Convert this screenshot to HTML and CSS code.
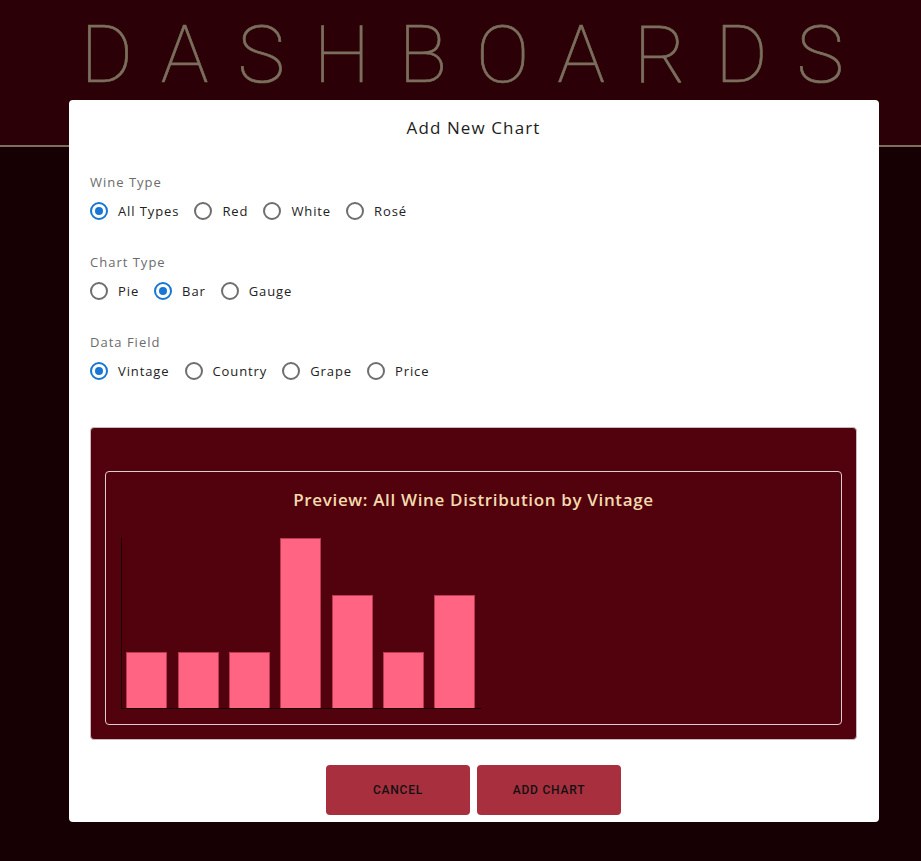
FILE: index.html
```html
<!DOCTYPE html>
<html>
<head>
<meta charset="utf-8">
<link rel="stylesheet" href="styles.css">
</head>
<body>
<header class="top">
  <h1 class="brand">DASHBOARDS</h1>
</header>
<main class="board"></main>

<div class="overlay">
  <div class="modal">
    <h2 class="modal-title">Add New Chart</h2>

    <section class="group">
      <div class="group-label">Wine Type</div>
      <div class="options">
        <label class="opt"><span class="radio on"></span>All Types</label>
        <label class="opt"><span class="radio"></span>Red</label>
        <label class="opt"><span class="radio"></span>White</label>
        <label class="opt"><span class="radio"></span>Rosé</label>
      </div>
    </section>

    <section class="group">
      <div class="group-label">Chart Type</div>
      <div class="options">
        <label class="opt"><span class="radio"></span>Pie</label>
        <label class="opt"><span class="radio on"></span>Bar</label>
        <label class="opt"><span class="radio"></span>Gauge</label>
      </div>
    </section>

    <section class="group">
      <div class="group-label">Data Field</div>
      <div class="options">
        <label class="opt"><span class="radio on"></span>Vintage</label>
        <label class="opt"><span class="radio"></span>Country</label>
        <label class="opt"><span class="radio"></span>Grape</label>
        <label class="opt"><span class="radio"></span>Price</label>
      </div>
    </section>

    <div class="preview">
      <div class="preview-inner">
        <div class="preview-title">Preview: All Wine Distribution by Vintage</div>
        <svg class="chart" width="370" height="182" viewBox="0 0 370 182">
          <g fill="#ff6482" stroke="#b83a55" stroke-width="1">
            <rect x="5.5" y="125.5" width="40" height="56"/>
            <rect x="57.5" y="125.5" width="40" height="56"/>
            <rect x="108.5" y="125.5" width="40" height="56"/>
            <rect x="159.5" y="11.5" width="40" height="170"/>
            <rect x="211.5" y="68.5" width="40" height="113"/>
            <rect x="262.5" y="125.5" width="40" height="56"/>
            <rect x="313.5" y="68.5" width="40" height="113"/>
          </g>
          <line x1="0.5" y1="10" x2="0.5" y2="182" stroke="#1a0000" stroke-width="1"/>
          <line x1="0" y1="181.5" x2="360" y2="181.5" stroke="#1a0000" stroke-width="1"/>
        </svg>
      </div>
    </div>

    <div class="actions">
      <button class="btn">CANCEL</button>
      <button class="btn">ADD CHART</button>
    </div>
  </div>
</div>
</body>
</html>
```

FILE: styles.css
```css
* { box-sizing: border-box; }
html, body { margin: 0; padding: 0; }
body {
  width: 921px;
  height: 861px;
  overflow: hidden;
  background: #170003;
  font-family: "Open Sans", "Noto Sans", sans-serif;
  position: relative;
}
.top {
  height: 147px;
  background: #2b0006;
  border-bottom: 2px solid #7b6f5d;
  display: flex;
  justify-content: center;
}
.brand {
  margin: 10px 0 0 0;
  font-family: Roboto, sans-serif;
  font-weight: 100;
  font-size: 80px;
  line-height: 90px;
  letter-spacing: 28.9px;
  padding-left: 32px;
  color: #7b6f5d;
  -webkit-text-stroke: 0.7px #7b6f5d;
}
.board {
  height: 714px;
  background: repeating-linear-gradient(90deg, #170003 0 40px, #160003 40px 80px);
}
.overlay {
  position: absolute;
  left: 0; top: 0;
  width: 921px; height: 861px;
}
.modal {
  position: absolute;
  left: 69px; top: 100px;
  width: 810px;
  height: 722px;
  background: #fff;
  border-radius: 4px;
  padding: 16px 22px 0 21px;
  display: flex;
  flex-direction: column;
}
.modal-title {
  margin: 0;
  text-align: center;
  font-size: 17px;
  font-weight: 500;
  line-height: 24px;
  letter-spacing: 1.1px;
  color: #1d1d1d;
}
.group { margin-top: 33px; }
.group + .group { margin-top: 32px; }
.group-label {
  font-size: 13px;
  line-height: 18px;
  letter-spacing: 1px;
  color: #6b6b6b;
}
.options {
  display: flex;
  align-items: center;
  margin-top: 10px;
  height: 20px;
}
.opt {
  display: flex;
  align-items: center;
  font-size: 13px;
  letter-spacing: 0.9px;
  color: #222;
  margin-right: 15px;
}
.radio {
  width: 18px; height: 18px;
  border: 2px solid #6e6e6e;
  border-radius: 50%;
  margin-right: 10px;
  position: relative;
}
.radio.on { border-color: #1976d2; }
.radio.on::after {
  content: "";
  position: absolute;
  left: 3px; top: 3px;
  width: 8px; height: 8px;
  border-radius: 50%;
  background: #1976d2;
}
.preview {
  margin-top: 46px;
  height: 313px;
  background: #52020d;
  border: 1px solid #c9b9bb;
  border-radius: 4px;
  padding: 43px 14px 14px 14px;
}
.preview-inner {
  height: 254px;
  border: 1px solid #d9cfcf;
  border-radius: 4px;
  padding: 16px 0 0 15px;
}
.preview-title {
  text-align: center;
  margin-left: -15px;
  font-size: 17px;
  font-weight: 600;
  line-height: 24px;
  letter-spacing: 0.65px;
  color: #f3dbad;
}
.chart { display: block; margin-top: 15px; }
.actions {
  display: flex;
  justify-content: center;
  gap: 7px;
  margin-top: 25px;
}
.btn {
  width: 144px;
  height: 50px;
  border: none;
  border-radius: 4px;
  background: #a82f3e;
  color: #111;
  font-family: Roboto, "Liberation Sans", sans-serif;
  font-weight: 500;
  font-size: 12px;
  letter-spacing: 0.8px;
}
```
